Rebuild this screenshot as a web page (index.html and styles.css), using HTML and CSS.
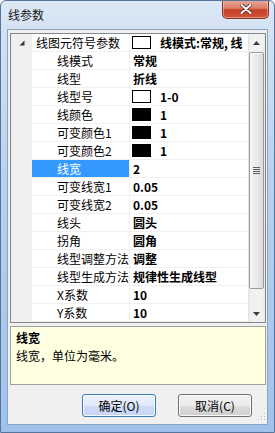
FILE: index.html
```html
<!DOCTYPE html>
<html lang="zh">
<head>
<meta charset="utf-8">
<title>线参数</title>
<link rel="stylesheet" href="styles.css">
</head>
<body>
<div class="window">
  <div class="titlebar">
    <span class="title">线参数</span>
    <div class="close">
      <svg width="12" height="10" viewBox="0 0 12 10"><path d="M1.5 1 L10.5 9 M10.5 1 L1.5 9" stroke="#5a2a22" stroke-width="3.6" stroke-linecap="round"/><path d="M1.5 1 L10.5 9 M10.5 1 L1.5 9" stroke="#ffffff" stroke-width="2" stroke-linecap="round"/></svg>
    </div>
  </div>
  <div class="client">
    <div class="grid">
      <div class="rows">
        <div class="row"><div class="gut"><svg width="6" height="6" viewBox="0 0 6 6"><polygon points="5.5,0.5 5.5,5.5 0.5,5.5" fill="#333"/></svg></div><div class="name root">线图元符号参数</div><div class="val"><span class="sw"></span><span class="clip">线模式:常规, 线</span></div></div>
        <div class="row"><div class="gut"></div><div class="name">线模式</div><div class="val">常规</div></div>
        <div class="row"><div class="gut"></div><div class="name">线型</div><div class="val">折线</div></div>
        <div class="row"><div class="gut"></div><div class="name">线型号</div><div class="val"><span class="sw"></span>1-0</div></div>
        <div class="row"><div class="gut"></div><div class="name">线颜色</div><div class="val"><span class="sw k"></span>1</div></div>
        <div class="row"><div class="gut"></div><div class="name">可变颜色1</div><div class="val"><span class="sw k"></span>1</div></div>
        <div class="row"><div class="gut"></div><div class="name">可变颜色2</div><div class="val"><span class="sw k"></span>1</div></div>
        <div class="row sel"><div class="gut"></div><div class="name">线宽</div><div class="val">2</div></div>
        <div class="row"><div class="gut"></div><div class="name">可变线宽1</div><div class="val">0.05</div></div>
        <div class="row"><div class="gut"></div><div class="name">可变线宽2</div><div class="val">0.05</div></div>
        <div class="row"><div class="gut"></div><div class="name">线头</div><div class="val">圆头</div></div>
        <div class="row"><div class="gut"></div><div class="name">拐角</div><div class="val">圆角</div></div>
        <div class="row"><div class="gut"></div><div class="name">线型调整方法</div><div class="val">调整</div></div>
        <div class="row"><div class="gut"></div><div class="name">线型生成方法</div><div class="val">规律性生成线型</div></div>
        <div class="row"><div class="gut"></div><div class="name">X系数</div><div class="val">10</div></div>
        <div class="row"><div class="gut"></div><div class="name">Y系数</div><div class="val">10</div></div>
      </div>
      <div class="sb">
        <div class="sb-btn"><svg width="7" height="4" viewBox="0 0 7 4"><polygon points="3.5,0 7,4 0,4" fill="#3c3c3c"/></svg></div>
        <div class="thumb"><div class="grip"><i></i><i></i><i></i><i></i></div></div>
        <div class="sb-track"></div>
        <div class="sb-btn"><svg width="7" height="4" viewBox="0 0 7 4"><polygon points="0,0 7,0 3.5,4" fill="#3c3c3c"/></svg></div>
      </div>
    </div>
    <div class="desc">
      <div class="desc-title">线宽</div>
      <div class="desc-text">线宽，单位为毫米。</div>
    </div>
    <div class="btns">
      <div class="btn def">确定(O)</div>
      <div class="btn">取消(C)</div>
    </div>
    <svg class="sizegrip" width="10" height="10" viewBox="0 0 10 10">
      <g fill="#b8b8b8"><rect x="8" y="0" width="1" height="1"/><rect x="5" y="3" width="1" height="1"/><rect x="8" y="3" width="1" height="1"/><rect x="2" y="6" width="1" height="1"/><rect x="5" y="6" width="1" height="1"/><rect x="8" y="6" width="1" height="1"/></g>
      <g fill="#ffffff"><rect x="9" y="1" width="1" height="1"/><rect x="6" y="4" width="1" height="1"/><rect x="9" y="4" width="1" height="1"/><rect x="3" y="7" width="1" height="1"/><rect x="6" y="7" width="1" height="1"/><rect x="9" y="7" width="1" height="1"/></g>
    </svg>
  </div>
</div>
</body>
</html>
```
FILE: styles.css
```css
html, body {
  margin: 0;
  padding: 0;
  background: #ffffff;
}
body {
  font-family: "Noto Sans CJK SC", "Noto Sans", sans-serif;
  font-size: 12px;
  color: #000;
}
.window {
  width: 275px;
  height: 433px;
  box-sizing: border-box;
  border: 1px solid #56759c;
  border-radius: 6px 6px 0 0;
  background: linear-gradient(#dde8f5 0, #d3e2f3 28px, #b9d1ee 180px, #a0c2ea 433px);
  display: flex;
  flex-direction: column;
  overflow: hidden;
}
.titlebar {
  height: 28px;
  flex: none;
  display: flex;
  align-items: center;
  padding-left: 7px;
}
.title {
  line-height: 28px;
  color: #1a1a1a;
}
.close {
  margin-left: auto;
  align-self: flex-start;
  margin-top: -1px;
  margin-right: 5px;
  width: 47px;
  height: 19px;
  box-sizing: border-box;
  border: 1px solid #7f3527;
  border-top: none;
  border-radius: 0 0 5px 5px;
  background: linear-gradient(#e8ab9b 0, #da7f68 45%, #c63f26 55%, #cf543b 100%);
  display: flex;
  align-items: center;
  justify-content: center;
  box-shadow: inset 0 0 0 1px rgba(255, 220, 210, 0.45);
}
.client {
  flex: 1;
  margin: 0 6px 7px;
  border: 1px solid #8da4c0;
  background: #f0f0f0;
  display: flex;
  flex-direction: column;
  padding: 3px 1px 0 2px;
  position: relative;
}
.grid {
  height: 290px;
  flex: none;
  box-sizing: border-box;
  border: 1px solid #828790;
  background: #fff;
  display: flex;
}
.rows {
  flex: 1;
  min-width: 0;
  display: flex;
  flex-direction: column;
}
.row {
  display: flex;
  height: 18px;
}
.gut {
  width: 21px;
  flex: none;
  background: #f0f0f0;
  display: flex;
  align-items: center;
  justify-content: center;
  padding-left: 1px;
  box-sizing: border-box;
}
.name {
  width: 98px;
  flex: none;
  box-sizing: border-box;
  border-right: 1px solid #f0f0f0;
  border-bottom: 1px solid #f0f0f0;
  padding-left: 25px;
  line-height: 17px;
  white-space: nowrap;
  overflow: hidden;
}
.name.root {
  padding-left: 4px;
}
.val {
  flex: 1;
  min-width: 0;
  box-sizing: border-box;
  border-bottom: 1px solid #f0f0f0;
  display: flex;
  align-items: center;
  padding-left: 3px;
  font-weight: bold;
  white-space: nowrap;
  overflow: hidden;
  line-height: 17px;
}
.clip {
  overflow: hidden;
  min-width: 0;
}
.sw {
  width: 19px;
  height: 13px;
  flex: none;
  box-sizing: border-box;
  border: 1px solid #000;
  background: #fff;
  margin-left: -1px;
  margin-right: 9px;
}
.sw.k {
  background: #000;
}
.row.sel .name {
  background: #3399ff;
  color: #fff;
}
.sb {
  width: 17px;
  flex: none;
  display: flex;
  flex-direction: column;
  background: linear-gradient(90deg, #e2e2e2 0, #f1f1f1 15%, #f1f1f1 85%, #e6e6e6 100%);
}
.sb-btn {
  height: 17px;
  flex: none;
  display: flex;
  align-items: center;
  justify-content: center;
}
.thumb {
  height: 237px;
  flex: none;
  margin: 1px 1px 0;
  box-sizing: border-box;
  border: 1px solid #9b9b9b;
  border-radius: 2px;
  background: linear-gradient(90deg, #f4f4f4 0, #ebebeb 50%, #d9d9d9 100%);
  box-shadow: inset 1px 1px 0 #fbfbfb;
  display: flex;
  align-items: center;
  justify-content: center;
}
.grip {
  display: flex;
  flex-direction: column;
  gap: 1px;
}
.grip i {
  display: block;
  width: 7px;
  height: 1px;
  background: #5d5d5d;
}
.sb-track {
  flex: 1;
}
.desc {
  margin-top: 3px;
  height: 59px;
  flex: none;
  box-sizing: border-box;
  border: 1px solid #a0a0a0;
  background: #ffffe1;
  padding: 2px 5px;
  line-height: 18px;
}
.desc-title {
  font-weight: bold;
}
.btns {
  display: flex;
  justify-content: flex-end;
  gap: 22px;
  padding-right: 14px;
  margin-top: 9px;
}
.btn {
  width: 74px;
  height: 23px;
  box-sizing: border-box;
  border: 1px solid #707070;
  border-radius: 3px;
  background: linear-gradient(#f2f2f2 0, #ebebeb 50%, #dddddd 50%, #cfcfcf 100%);
  box-shadow: inset 0 0 0 1px #fbfbfb;
  display: flex;
  align-items: center;
  justify-content: center;
  line-height: 21px;
}
.btn.def {
  border-color: #3c7fb1;
  background: linear-gradient(#edf2fc 0, #e1e9f9 50%, #cfdcf6 50%, #c4d5f3 100%);
  box-shadow: inset 0 0 0 1px #f4f8ff;
}
.sizegrip {
  position: absolute;
  right: 1px;
  bottom: 1px;
}
```
